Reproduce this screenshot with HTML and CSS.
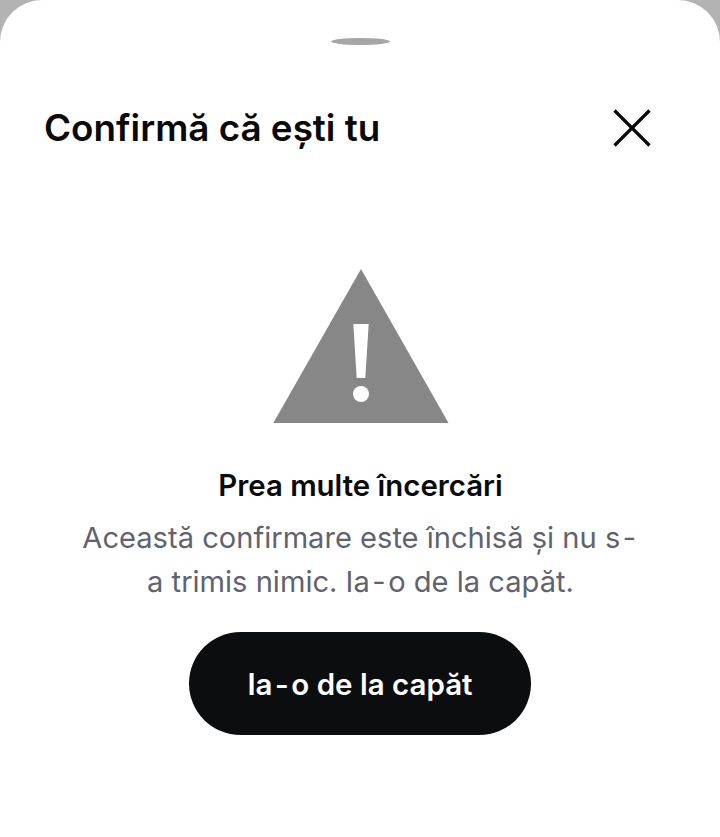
FILE: index.html
```html
<!DOCTYPE html>
<html lang="ro">
<head>
<meta charset="utf-8">
<title>Confirmă că ești tu</title>
<link rel="stylesheet" href="styles.css">
</head>
<body>
<div class="sheet">
  <div class="handle"></div>
  <header class="head">
    <h1 class="title">Confirmă că ești tu</h1>
    <svg class="close" viewBox="0 0 38 38" aria-label="Închide"><path d="M1.5 1.5 36.5 36.5M36.5 1.5 1.5 36.5"/></svg>
  </header>
  <main class="body">
    <svg class="warn" viewBox="0 0 176 154"><path class="tri" d="M88 0 175.500 154H.3Z"/><path class="mark" d="M80.300 55h15.400l-3.400 54h-8.600Z"/><circle class="mark" cx="88" cy="125" r="8"/></svg>
    <h2 class="subtitle">Prea multe încercări</h2>
    <p class="text">Această confirmare este închisă și nu s<span class="hy">-</span><br>a trimis nimic. Ia<span class="hy">-</span>o de la capăt.</p>
    <button class="btn">Ia<span class="hy">-</span>o de la capăt</button>
  </main>
</div>
</body>
</html>
```
FILE: styles.css
```css
* { box-sizing: border-box; }
html, body { margin: 0; height: 100%; }
body { background: #b3b3b3; font-family: Inter, "Liberation Sans", sans-serif; overflow: hidden; }
.sheet { height: 837px; background: #fff; border-radius: 42px 42px 0 0; padding-top: 38px; display: flex; flex-direction: column; }
.handle { width: 59px; height: 7px; border-radius: 50%; background: #a6a6a6; align-self: center; margin-left: 1px; }
.head { display: flex; align-items: center; justify-content: space-between; padding: 0 69px 0 44px; margin-top: 63px; height: 40px; }
.title { margin: 0; font-size: 36.800px; line-height: 40px; font-weight: 600; color: #0a0a0a; }
.close { width: 38px; height: 38px; fill: none; stroke: #0a0a0a; stroke-width: 3.2; }
.body { display: flex; flex-direction: column; align-items: center; padding-top: 121px; padding-left: 1px; }
.warn { width: 176px; height: 154px; }
.tri { fill: #878787; }
.mark { fill: #fff; }
.subtitle { margin: 46px 0 0; font-size: 29.400px; line-height: 34px; font-weight: 600; color: #0a0a0a; }
.text { margin: 13px 0 0; font-size: 29.100px; line-height: 44px; font-weight: 400; color: #5f6370; text-align: center; }
.hy { margin: 0 2.500px; }
.btn { margin: 28px 0 0 -1px; width: 342px; height: 103px; border: 0; border-radius: 52px; background: #0c0d0f; color: #fff; font-family: inherit; font-size: 29.500px; font-weight: 600; }
```
